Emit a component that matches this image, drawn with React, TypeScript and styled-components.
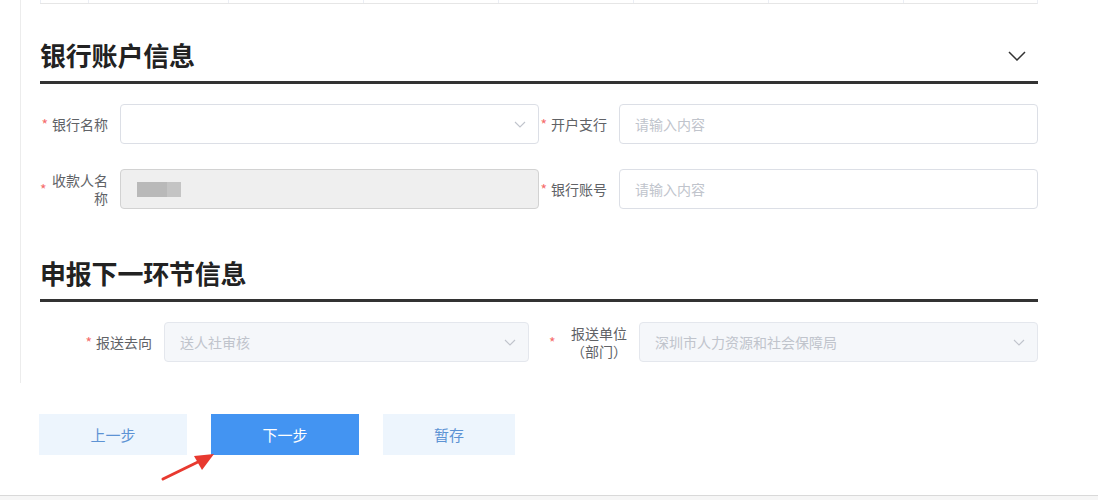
import styled, { createGlobalStyle } from 'styled-components';

const GlobalStyle = createGlobalStyle`
  html, body {
    margin: 0;
    padding: 0;
    background: #ffffff;
  }
  body {
    font-family: "Noto Sans CJK SC", "Noto Sans", sans-serif;
    color: #606266;
  }
`;

const Page = styled.div`
  width: 1098px;
  height: 500px;
  overflow: hidden;
  position: relative;
`;

const Card = styled.div`
  margin-left: 20px;
  border-left: 1px solid #ececec;
  padding: 0 0 21px 19px;
`;

const Inner = styled.div`
  width: 998px;
`;

const TableStub = styled.div`
  display: grid;
  grid-template-columns: 48px 140px repeat(6, 135px);
  height: 3px;
  border-bottom: 1px solid #e6e6e6;
  border-right: 1px solid #ebeef5;
`;

const TableCell = styled.div`
  border-left: 1px solid #ebeef5;
`;

const SectionHeader = styled.div<{ $top: number }>`
  display: flex;
  align-items: center;
  justify-content: space-between;
  margin-top: ${(p) => p.$top}px;
  padding-bottom: 8px;
  border-bottom: 3px solid #333333;
`;

const SectionTitle = styled.h2`
  margin: 0;
  font-size: 26px;
  line-height: 36px;
  font-weight: 700;
  color: #222222;
  letter-spacing: -0.2px;
`;

const Collapse = styled.span`
  display: flex;
  margin-right: 12px;
  margin-top: 2px;
`;

const FormGrid = styled.div<{ $gap: number }>`
  display: grid;
  grid-template-columns: 1fr 1fr;
  column-gap: ${(p) => p.$gap}px;
  row-gap: 25px;
  margin-top: 20px;
`;

const FormItem = styled.div`
  display: flex;
  align-items: center;
  min-width: 0;
`;

const Label = styled.label<{ $width: number }>`
  flex: none;
  box-sizing: border-box;
  width: ${(p) => p.$width}px;
  padding-right: 12px;
  display: flex;
  align-items: center;
  justify-content: flex-end;
  font-size: 14px;
  line-height: 18px;
  color: #606266;
`;

const Star = styled.span`
  color: #f56c6c;
  margin-right: 4px;
  flex: none;
`;

const LabelText = styled.span`
  text-align: right;
`;

// full-width bracket cell, keeps the bracket one em wide
const Bracket = styled.span<{ $side: 'open' | 'close' }>`
  display: inline-block;
  width: 14px;
  text-align: ${(p) => (p.$side === 'open' ? 'right' : 'left')};
`;

const Input = styled.input`
  flex: 1;
  min-width: 0;
  box-sizing: border-box;
  height: 40px;
  padding: 0 15px;
  border: 1px solid #dcdfe6;
  border-radius: 4px;
  font-family: inherit;
  font-size: 14px;
  color: #606266;
  background: #ffffff;
  outline: none;

  &::placeholder {
    color: #c0c4cc;
  }
`;

const MaskedInput = styled.div`
  flex: 1;
  box-sizing: border-box;
  height: 40px;
  padding: 0 15px 0 16px;
  display: flex;
  align-items: center;
  border: 1px solid #d2d2d2;
  border-radius: 4px;
  background: #efefef;
`;

const Redacted = styled.span`
  display: block;
  width: 44px;
  height: 15px;
  background: linear-gradient(90deg, #b9b9b9 0 30px, #c4c4c4 30px 44px);
`;

const Select = styled.div<{ $disabled?: boolean }>`
  flex: 1;
  min-width: 0;
  box-sizing: border-box;
  height: 40px;
  padding: 0 12px 0 15px;
  display: flex;
  align-items: center;
  justify-content: space-between;
  border: 1px solid ${(p) => (p.$disabled ? '#e4e7ed' : '#dcdfe6')};
  border-radius: 4px;
  background: ${(p) => (p.$disabled ? '#f5f7fa' : '#ffffff')};
  font-size: 14px;
  color: #c0c4cc;
`;

const Actions = styled.div`
  display: flex;
  gap: 24px;
  margin: 31px 0 0 39px;
`;

const Button = styled.button<{ $primary?: boolean; $width: number }>`
  width: ${(p) => p.$width}px;
  height: 41px;
  border: none;
  border-radius: 0;
  font-family: inherit;
  font-size: 15px;
  cursor: pointer;
  background: ${(p) => (p.$primary ? '#4394f2' : '#edf5fd')};
  color: ${(p) => (p.$primary ? '#ffffff' : '#5d93d4')};
`;

const Footer = styled.div`
  position: absolute;
  left: 0;
  right: 0;
  top: 495px;
  bottom: 0;
  border-top: 1px solid #d9d9d9;
  background: #f6f6f6;
`;

const Pointer = styled.svg`
  position: absolute;
  left: 158px;
  top: 448px;
`;

const Chevron = ({ size, color }: { size: 'lg' | 'sm'; color: string }) =>
  size === 'lg' ? (
    <svg width="18" height="10" viewBox="0 0 18 10">
      <path d="M1 1 L9 9 L17 1" fill="none" stroke={color} strokeWidth="1.5" />
    </svg>
  ) : (
    <svg width="12" height="7" viewBox="0 0 12 7">
      <path d="M1 1 L6 6 L11 1" fill="none" stroke={color} strokeWidth="1.1" />
    </svg>
  );

export default function App() {
  return (
    <Page>
      <GlobalStyle />
      <Card>
        <Inner>
          <TableStub>
            {Array.from({ length: 8 }).map((_, i) => (
              <TableCell key={i} />
            ))}
          </TableStub>

          <SectionHeader $top={33}>
            <SectionTitle>银行账户信息</SectionTitle>
            <Collapse>
              <Chevron size="lg" color="#333333" />
            </Collapse>
          </SectionHeader>

          <FormGrid $gap={0}>
            <FormItem>
              <Label $width={80}>
                <Star>*</Star>
                <LabelText>银行名称</LabelText>
              </Label>
              <Select>
                <span />
                <Chevron size="sm" color="#c0c4cc" />
              </Select>
            </FormItem>
            <FormItem>
              <Label $width={80}>
                <Star>*</Star>
                <LabelText>开户支行</LabelText>
              </Label>
              <Input placeholder="请输入内容" />
            </FormItem>
            <FormItem>
              <Label $width={80}>
                <Star>*</Star>
                <LabelText>收款人名称</LabelText>
              </Label>
              <MaskedInput>
                <Redacted />
              </MaskedInput>
            </FormItem>
            <FormItem>
              <Label $width={80}>
                <Star>*</Star>
                <LabelText>银行账号</LabelText>
              </Label>
              <Input placeholder="请输入内容" />
            </FormItem>
          </FormGrid>

          <SectionHeader $top={46}>
            <SectionTitle>申报下一环节信息</SectionTitle>
          </SectionHeader>

          <FormGrid $gap={20}>
            <FormItem>
              <Label $width={124}>
                <Star>*</Star>
                <LabelText>报送去向</LabelText>
              </Label>
              <Select $disabled>
                <span>送人社审核</span>
                <Chevron size="sm" color="#c0c4cc" />
              </Select>
            </FormItem>
            <FormItem>
              <Label $width={90}>
                <Star>*</Star>
                <LabelText>
                  报送单位<Bracket $side="open">（</Bracket>部门<Bracket $side="close">）</Bracket>
                </LabelText>
              </Label>
              <Select $disabled>
                <span>深圳市人力资源和社会保障局</span>
                <Chevron size="sm" color="#c0c4cc" />
              </Select>
            </FormItem>
          </FormGrid>
        </Inner>
      </Card>

      <Actions>
        <Button $width={148}>上一步</Button>
        <Button $width={148} $primary>
          下一步
        </Button>
        <Button $width={132}>暂存</Button>
      </Actions>

      <Pointer width="60" height="36" viewBox="0 0 60 36">
        <path d="M5 31 L44 12" stroke="#e8392f" strokeWidth="3" strokeLinecap="round" />
        <polygon points="56,6 36,8 44,22" fill="#e8392f" />
      </Pointer>

      <Footer />
    </Page>
  );
}
